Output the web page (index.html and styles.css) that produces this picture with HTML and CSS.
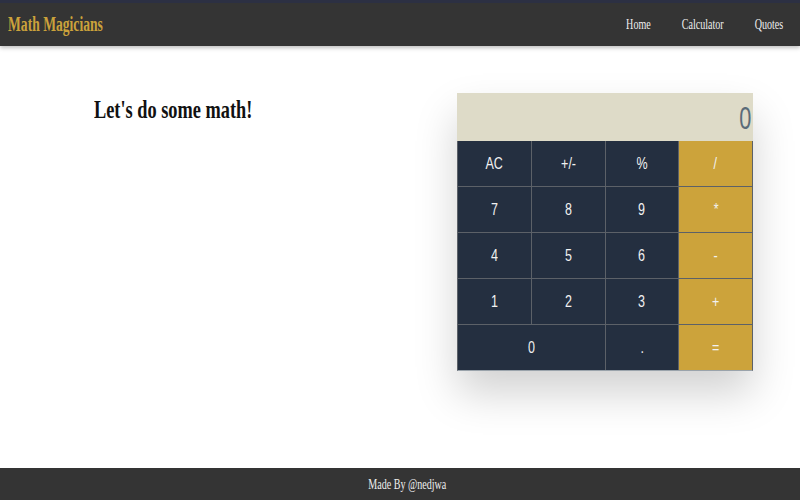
FILE: index.html
```html
<!DOCTYPE html>
<html lang="en">
<head>
<meta charset="utf-8">
<title>Math Magicians</title>
<link rel="stylesheet" href="styles.css">
</head>
<body>
<header class="header">
  <h1 class="logo"><span class="narrow left">Math Magicians</span></h1>
  <nav class="nav">
    <a href="#" class="nav-link">Home</a>
    <a href="#" class="nav-link">Calculator</a>
    <a href="#" class="nav-link">Quotes</a>
  </nav>
</header>
<main class="main">
  <h2 class="title"><span class="narrow left">Let's do some math!</span></h2>
  <div class="calc">
    <div class="display"><span class="narrow right">0</span></div>
    <div class="keys">
      <button class="key"><span class="narrow">AC</span></button>
      <button class="key"><span class="narrow">+/-</span></button>
      <button class="key"><span class="narrow">%</span></button>
      <button class="key op"><span class="narrow">/</span></button>
      <button class="key"><span class="narrow">7</span></button>
      <button class="key"><span class="narrow">8</span></button>
      <button class="key"><span class="narrow">9</span></button>
      <button class="key op"><span class="narrow">*</span></button>
      <button class="key"><span class="narrow">4</span></button>
      <button class="key"><span class="narrow">5</span></button>
      <button class="key"><span class="narrow">6</span></button>
      <button class="key op"><span class="narrow">-</span></button>
      <button class="key"><span class="narrow">1</span></button>
      <button class="key"><span class="narrow">2</span></button>
      <button class="key"><span class="narrow">3</span></button>
      <button class="key op"><span class="narrow">+</span></button>
      <button class="key wide"><span class="narrow">0</span></button>
      <button class="key"><span class="narrow">.</span></button>
      <button class="key op"><span class="narrow">=</span></button>
    </div>
  </div>
</main>
<footer class="footer"><span class="narrow">Made By @nedjwa</span></footer>
</body>
</html>
```
FILE: styles.css
```css
* { box-sizing: border-box; }
html, body { margin: 0; padding: 0; }
body {
  min-height: 100vh;
  display: flex;
  flex-direction: column;
  font-family: "Liberation Serif", serif;
  background: #fff;
}
.narrow {
  display: inline-block;
  transform: scaleX(0.75);
  transform-origin: center;
  white-space: nowrap;
}
.narrow.left { transform-origin: left center; }
.narrow.right { transform-origin: right center; }
.header {
  height: 46px;
  border-top: 3px solid #2c3043;
  background: #343434;
  display: flex;
  align-items: center;
  justify-content: space-between;
  padding: 0 17px 0 8px;
  box-shadow: 0 2px 4px rgba(0,0,0,0.25);
  position: relative;
  z-index: 1;
}
.logo {
  margin: 0;
  font-family: "Liberation Serif", serif;
  font-weight: bold;
  font-size: 20px;
  color: #cba23b;
}
.logo .narrow { transform: scaleX(0.68); }
.nav {
  display: flex;
  gap: 43px;
  transform: scaleX(0.72);
  transform-origin: right center;
}
.nav-link {
  color: #eeeeee;
  text-decoration: none;
  font-size: 14px;
}
.main {
  flex: 1;
  display: flex;
  justify-content: space-between;
  align-items: flex-start;
  padding: 47px 47px 0 94px;
}
.title {
  margin: 2px 0 0;
  font-size: 26px;
  font-weight: bold;
  color: #111;
}
.title .narrow { transform: scaleX(0.705); }
.calc {
  width: 296px;
  box-shadow: 0 22px 40px rgba(0,0,0,0.18);
}
.display {
  height: 48px;
  background: #dedbc8;
  text-align: right;
  font-family: "Liberation Sans", sans-serif;
  font-size: 31px;
  font-weight: 300;
  color: #5a6b79;
  padding: 10px 2px 0 0;
  line-height: 32px;
}
.display .narrow { transform: scaleX(0.7); }
.keys {
  display: grid;
  grid-template-columns: repeat(4, 1fr);
  grid-auto-rows: 45px;
  gap: 1px;
  background: #5c6168;
  border: 1px solid #5c6168;
  border-top: 0;
  border-bottom-color: #9aa3ab;
}
.key {
  border: 0;
  margin: 0;
  padding: 0;
  background: #242f40;
  color: #f1f1f1;
  font-family: "Liberation Sans", sans-serif;
  font-size: 16px;
}
.key .narrow { transform: scaleX(0.78); }
.key.op { background: #cca33b; }
.key.wide { grid-column: span 2; }
.footer {
  height: 32px;
  background: #343434;
  color: #eeeeee;
  text-align: center;
  font-size: 14px;
  line-height: 34px;
  padding-left: 14px;
}
.footer .narrow { transform: scaleX(0.72); }
```
